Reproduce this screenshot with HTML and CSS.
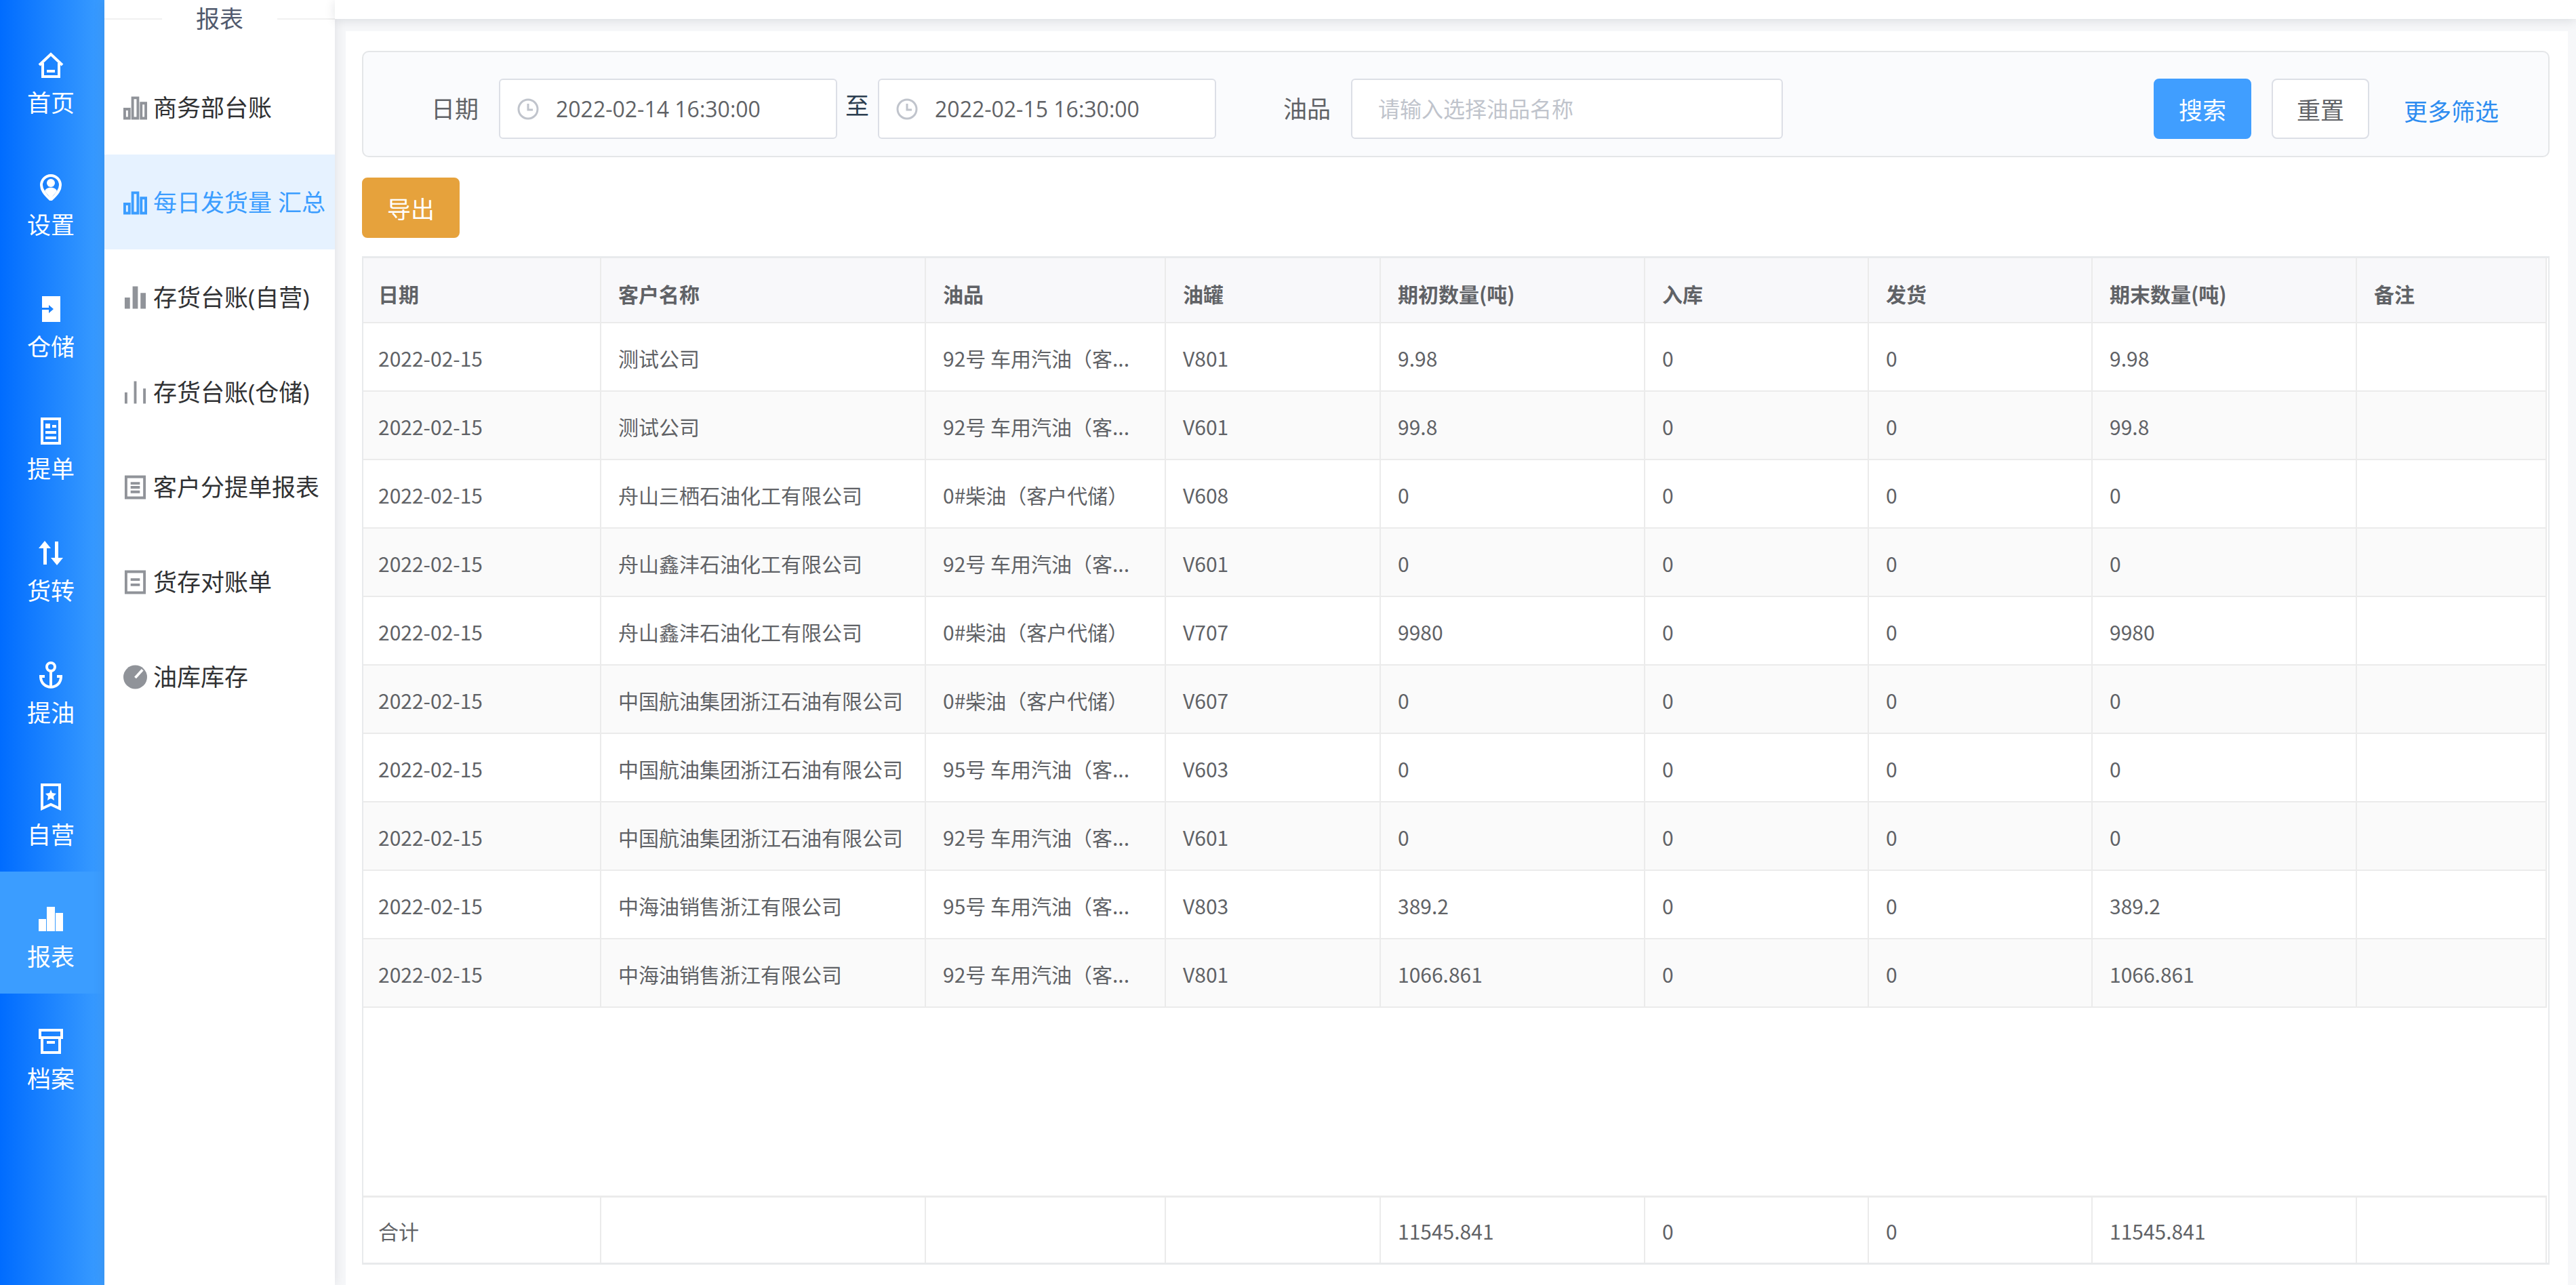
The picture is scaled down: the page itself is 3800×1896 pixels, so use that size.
FILE: index.html
```
<!DOCTYPE html>
<html lang="zh-CN">
<head>
    <meta charset="UTF-8">
    <meta name="viewport" content="width=device-width, initial-scale=1.0">
    <title>每日发货量汇总</title>
    <link rel="stylesheet" href="styles.css">
</head>
<body>
    <!-- 一级菜单 -->
    <nav class="sidebar">
        <a href="#" class="side-item">
            <svg class="side-icon" viewBox="0 0 40 40"><path d="M3 20 20 4l17 16M8 17v20h24V17M14 29h12" /></svg>
            <span>首页</span>
        </a>
        <a href="#" class="side-item">
            <svg class="side-icon" viewBox="0 0 40 40"><path d="M20 39C10 30 6 24 6 17a14 14 0 0 1 28 0c0 7-4 13-14 22z" /><circle class="fill" cx="20" cy="14" r="6" /><path class="fill" d="M11 26c2-7 16-7 18 0l-9 11z" /></svg>
            <span>设置</span>
        </a>
        <a href="#" class="side-item">
            <svg class="side-icon" viewBox="0 0 40 40"><path class="fill" fill-rule="evenodd" d="M7 1h27v38H7V21h10v5l7-6-7-6v4H7z" /></svg>
            <span>仓储</span>
        </a>
        <a href="#" class="side-item">
            <svg class="side-icon" viewBox="0 0 40 40"><path d="M7 2h26v36H7zM12 22h16M12 30h16" /><path class="fill" d="M12 9h7v7h-7zM22 11h6v4h-6z" /></svg>
            <span>提单</span>
        </a>
        <a href="#" class="side-item">
            <svg class="side-icon" viewBox="0 0 40 40"><path class="fill" d="M9 37V13H2l9-11 9 11h-6v24zM26 3v24h-6l9 11 9-11h-7V3z" /></svg>
            <span>货转</span>
        </a>
        <a href="#" class="side-item">
            <svg class="side-icon" viewBox="0 0 40 40"><circle cx="20" cy="8" r="6" /><path d="M20 14v24M3 22h8M29 22h8M5 22c0 21 30 21 30 0" /></svg>
            <span>提油</span>
        </a>
        <a href="#" class="side-item">
            <svg class="side-icon" viewBox="0 0 40 40"><path d="M7 2h26v35l-13-6-13 6z" /><path class="fill" d="m20 9 2 5 6 1-4 4 1 6-5-3-5 3 1-6-4-4 6-1z" /></svg>
            <span>自营</span>
        </a>
        <a href="#" class="side-item active">
            <svg class="side-icon" viewBox="0 0 40 40"><path class="fill" d="M2 20h11v18H2zM14 2h12v36H14zM27 11h11v27H27z" /></svg>
            <span>报表</span>
        </a>
        <a href="#" class="side-item">
            <svg class="side-icon" viewBox="0 0 40 40"><path d="M4 4h32v11H4zM7 15v22h26V15M14 22h12" /></svg>
            <span>档案</span>
        </a>
    </nav>

    <!-- 二级菜单 -->
    <nav class="submenu">
        <div class="submenu-title"><span>报表</span></div>
        <a href="#" class="sub-item">
            <svg class="sub-icon" viewBox="0 0 36 36"><path d="M2 20h7v14H2zM14 3h8v31h-8zM27 11h7v23h-7z" /></svg>
            <span>商务部台账</span>
        </a>
        <a href="#" class="sub-item active">
            <svg class="sub-icon" viewBox="0 0 36 36"><path d="M2 20h7v14H2zM14 3h8v31h-8zM27 11h7v23h-7z" /></svg>
            <span>每日发货量 汇总</span>
        </a>
        <a href="#" class="sub-item">
            <svg class="sub-icon" viewBox="0 0 36 36"><path class="fill" d="M2 18h8v17H2zM14 1h8v34h-8zM26 11h8v24h-8z" /></svg>
            <span>存货台账(自营)</span>
        </a>
        <a href="#" class="sub-item">
            <svg class="sub-icon" viewBox="0 0 36 36"><path d="M4 18v17M18 1v34M32 12v23" /></svg>
            <span>存货台账(仓储)</span>
        </a>
        <a href="#" class="sub-item">
            <svg class="sub-icon" viewBox="0 0 36 36"><path d="M4 2h28v32H4zM11 12h14M11 18h14M11 25h14" /></svg>
            <span>客户分提单报表</span>
        </a>
        <a href="#" class="sub-item">
            <svg class="sub-icon" viewBox="0 0 36 36"><path d="M4 2h28v32H4zM11 14h14M11 22h14" /></svg>
            <span>货存对账单</span>
        </a>
        <a href="#" class="sub-item">
            <svg class="sub-icon" viewBox="0 0 36 36"><circle class="fill" cx="18" cy="18" r="18" /><path class="needle" d="M18 19 29 7" /></svg>
            <span>油库库存</span>
        </a>
    </nav>

    <div class="page">
        <header class="topbar"></header>
        <main class="card">
            <form class="filters">
                <label for="start">日期</label>
                <div class="date-box">
                    <svg class="clock" viewBox="0 0 32 32"><circle cx="16" cy="16" r="14" /><path d="M16 8v9h7" /></svg>
                    <input type="text" id="start" name="start" value="2022-02-14 16:30:00">
                </div>
                <label class="to" for="end">至</label>
                <div class="date-box">
                    <svg class="clock" viewBox="0 0 32 32"><circle cx="16" cy="16" r="14" /><path d="M16 8v9h7" /></svg>
                    <input type="text" id="end" name="end" value="2022-02-15 16:30:00">
                </div>
                <label class="oil-label" for="oil">油品</label>
                <input class="oil" type="text" id="oil" name="oil" placeholder="请输入选择油品名称">
                <div class="actions">
                    <button type="button" class="btn primary">搜索</button>
                    <button type="reset" class="btn">重置</button>
                    <a href="#" class="more">更多筛选</a>
                </div>
            </form>

            <button type="button" class="btn warning">导出</button>

            <div class="table-box">
                <table class="grid">
                    <colgroup>
                        <col class="c-date"><col class="c-customer"><col class="c-oil"><col class="c-tank"><col class="c-qty"><col class="c-flow"><col class="c-flow"><col class="c-qty"><col class="c-note">
                    </colgroup>
                    <thead>
                        <tr><th>日期</th><th>客户名称</th><th>油品</th><th>油罐</th><th>期初数量(吨)</th><th>入库</th><th>发货</th><th>期末数量(吨)</th><th>备注</th></tr>
                    </thead>
                    <tbody>
                        <tr><td>2022-02-15</td><td>测试公司</td><td>92号 车用汽油（客...</td><td>V801</td><td>9.98</td><td>0</td><td>0</td><td>9.98</td><td></td></tr>
                        <tr><td>2022-02-15</td><td>测试公司</td><td>92号 车用汽油（客...</td><td>V601</td><td>99.8</td><td>0</td><td>0</td><td>99.8</td><td></td></tr>
                        <tr><td>2022-02-15</td><td>舟山三栖石油化工有限公司</td><td>0#柴油（客户代储）</td><td>V608</td><td>0</td><td>0</td><td>0</td><td>0</td><td></td></tr>
                        <tr><td>2022-02-15</td><td>舟山鑫沣石油化工有限公司</td><td>92号 车用汽油（客...</td><td>V601</td><td>0</td><td>0</td><td>0</td><td>0</td><td></td></tr>
                        <tr><td>2022-02-15</td><td>舟山鑫沣石油化工有限公司</td><td>0#柴油（客户代储）</td><td>V707</td><td>9980</td><td>0</td><td>0</td><td>9980</td><td></td></tr>
                        <tr><td>2022-02-15</td><td>中国航油集团浙江石油有限公司</td><td>0#柴油（客户代储）</td><td>V607</td><td>0</td><td>0</td><td>0</td><td>0</td><td></td></tr>
                        <tr><td>2022-02-15</td><td>中国航油集团浙江石油有限公司</td><td>95号 车用汽油（客...</td><td>V603</td><td>0</td><td>0</td><td>0</td><td>0</td><td></td></tr>
                        <tr><td>2022-02-15</td><td>中国航油集团浙江石油有限公司</td><td>92号 车用汽油（客...</td><td>V601</td><td>0</td><td>0</td><td>0</td><td>0</td><td></td></tr>
                        <tr><td>2022-02-15</td><td>中海油销售浙江有限公司</td><td>95号 车用汽油（客...</td><td>V803</td><td>389.2</td><td>0</td><td>0</td><td>389.2</td><td></td></tr>
                        <tr><td>2022-02-15</td><td>中海油销售浙江有限公司</td><td>92号 车用汽油（客...</td><td>V801</td><td>1066.861</td><td>0</td><td>0</td><td>1066.861</td><td></td></tr>
                    </tbody>
                </table>

                <!-- 合计行固定在底部 -->
                <table class="grid total">
                    <colgroup>
                        <col class="c-date"><col class="c-customer"><col class="c-oil"><col class="c-tank"><col class="c-qty"><col class="c-flow"><col class="c-flow"><col class="c-qty"><col class="c-note">
                    </colgroup>
                    <tbody>
                        <tr><td>合计</td><td></td><td></td><td></td><td>11545.841</td><td>0</td><td>0</td><td>11545.841</td><td></td></tr>
                    </tbody>
                </table>
            </div>
        </main>
    </div>
</body>
</html>
```
FILE: styles.css
```
* {
    box-sizing: border-box;
}
body {
    margin: 0;
    display: flex;
    min-height: 100vh;
    background: #f6f7f9;
    color: #606266;
    font-family: "Open Sans", "Noto Sans CJK SC", sans-serif;
    font-size: 35px;
    line-height: 40px;
}
a {
    text-decoration: none;
}
input, button {
    font-family: inherit;
}
svg {
    fill: none;
    stroke: currentColor;
    stroke-width: 4;
}
svg .fill {
    fill: currentColor;
    stroke: none;
}

/* 一级菜单 */
.sidebar {
    flex: none;
    width: 154px;
    padding-top: 26px;
    background: linear-gradient(to right, #006cff, #3b9dff);
}
.side-item {
    display: flex;
    flex-direction: column;
    align-items: center;
    gap: 16px;
    height: 180px;
    padding: 50px 4px 0 0;
    color: #fff;
}
.side-item.active {
    background: #3b9dff;
}
.side-icon {
    width: 40px;
    height: 40px;
}

/* 二级菜单 */
.submenu {
    flex: none;
    width: 340px;
    background: #fff;
    box-shadow: 0 0 16px rgba(0, 21, 41, 0.1);
}
.submenu-title {
    display: flex;
    align-items: center;
    gap: 50px;
    height: 88px;
    padding-bottom: 32px;
    color: #515a6e;
}
.submenu-title::before, .submenu-title::after {
    content: "";
    flex: 1;
    height: 2px;
    background: #f0f0f0;
}
.sub-item {
    display: flex;
    align-items: center;
    gap: 9px;
    height: 140px;
    padding: 2px 0 0 28px;
    color: #303133;
    white-space: nowrap;
}
.sub-item.active {
    background: #e6f2ff;
    color: #3b9dff;
}
.sub-icon {
    width: 35px;
    height: 36px;
    color: #909399;
}
.sub-item.active .sub-icon {
    color: #3b9dff;
}
.needle {
    stroke: #fff;
}

/* 右侧内容 */
.page {
    flex: 1;
    min-width: 0;
    display: flex;
    flex-direction: column;
}
.topbar {
    height: 28px;
    background: #fff;
    box-shadow: 0 2px 16px rgba(0, 21, 41, 0.12);
}
.card {
    flex: 1;
    display: flex;
    flex-direction: column;
    align-items: stretch;
    margin: 18px 12px 0 16px;
    padding: 29px 27px 30px 24px;
    background: #fff;
    position: relative;
}
.filters {
    display: flex;
    align-items: center;
    height: 157px;
    padding: 14px 73px 0 100px;
    border: 2px solid #e4e6e8;
    border-radius: 10px;
    background: #fafbfd;
}
.filters label {
    margin-right: 30px;
}
.filters .to {
    margin: 0 13px 0 12px;
    padding-bottom: 10px;
    color: #2c3e50;
}
.filters .oil-label {
    margin-left: 99px;
}
.date-box, .oil {
    height: 89px;
    border: 2px solid #dcdfe6;
    border-radius: 6px;
    background: #fff;
}
.date-box {
    display: flex;
    align-items: center;
    width: 499px;
    padding-left: 25px;
}
.clock {
    flex: none;
    width: 32px;
    height: 32px;
    color: #c0c4cc;
    stroke-width: 3;
}
.date-box input {
    flex: 1;
    min-width: 0;
    margin-left: 25px;
    padding: 0;
    border: 0;
    background: none;
    color: #606266;
    font-size: 32px;
}
.oil {
    width: 637px;
    padding: 0 38px;
    font-size: 32px;
}
.oil::placeholder {
    color: #c0c4cc;
}
.actions {
    display: flex;
    align-items: center;
    gap: 30px;
    margin-left: auto;
}
.btn {
    width: 144px;
    height: 89px;
    padding: 0;
    border: 2px solid #dcdfe6;
    border-radius: 8px;
    background: #fff;
    color: #606266;
    font-size: 35px;
}
.btn.primary {
    border-color: #409eff;
    background: #409eff;
    color: #fff;
}
.btn.warning {
    margin: 30px 0 27px;
    border-color: #e6a23c;
    background: #e6a23c;
    color: #fff;
}
.more {
    margin-left: 21px;
    padding-top: 8px;
    color: #2d8cf0;
}

/* 表格 */
.table-box {
    flex: 1;
    display: flex;
    flex-direction: column;
    justify-content: space-between;
    padding-right: 2px;
    border: solid #e8eaec;
    border-width: 3px 2px;
}
.grid {
    width: 100%;
    table-layout: fixed;
    border-collapse: separate;
    border-spacing: 0;
    font-family: "Noto Sans CJK SC", "Open Sans", sans-serif;
    font-size: 30px;
}
.grid th, .grid td {
    padding: 2px 25px 0;
    border: solid #ebebeb;
    border-width: 0 2px 2px 0;
    text-align: left;
    white-space: nowrap;
}
.grid th:first-child, .grid td:first-child {
    padding-left: 22px;
}
.grid th {
    height: 96px;
    padding-top: 10px;
    background: #f8f8fa;
    font-weight: 600;
}
.grid td {
    height: 101px;
}
.grid tbody tr:nth-child(even) td {
    background: #fafafa;
}
.grid.total td {
    height: 99px;
    border-width: 3px 2px 0 0;
}
.c-date {
    width: 351px;
}
.c-customer {
    width: 479px;
}
.c-oil {
    width: 354px;
}
.c-tank {
    width: 317px;
}
.c-qty {
    width: 390px;
}
.c-flow {
    width: 330px;
}
.c-note {
    width: 280px;
}
```
